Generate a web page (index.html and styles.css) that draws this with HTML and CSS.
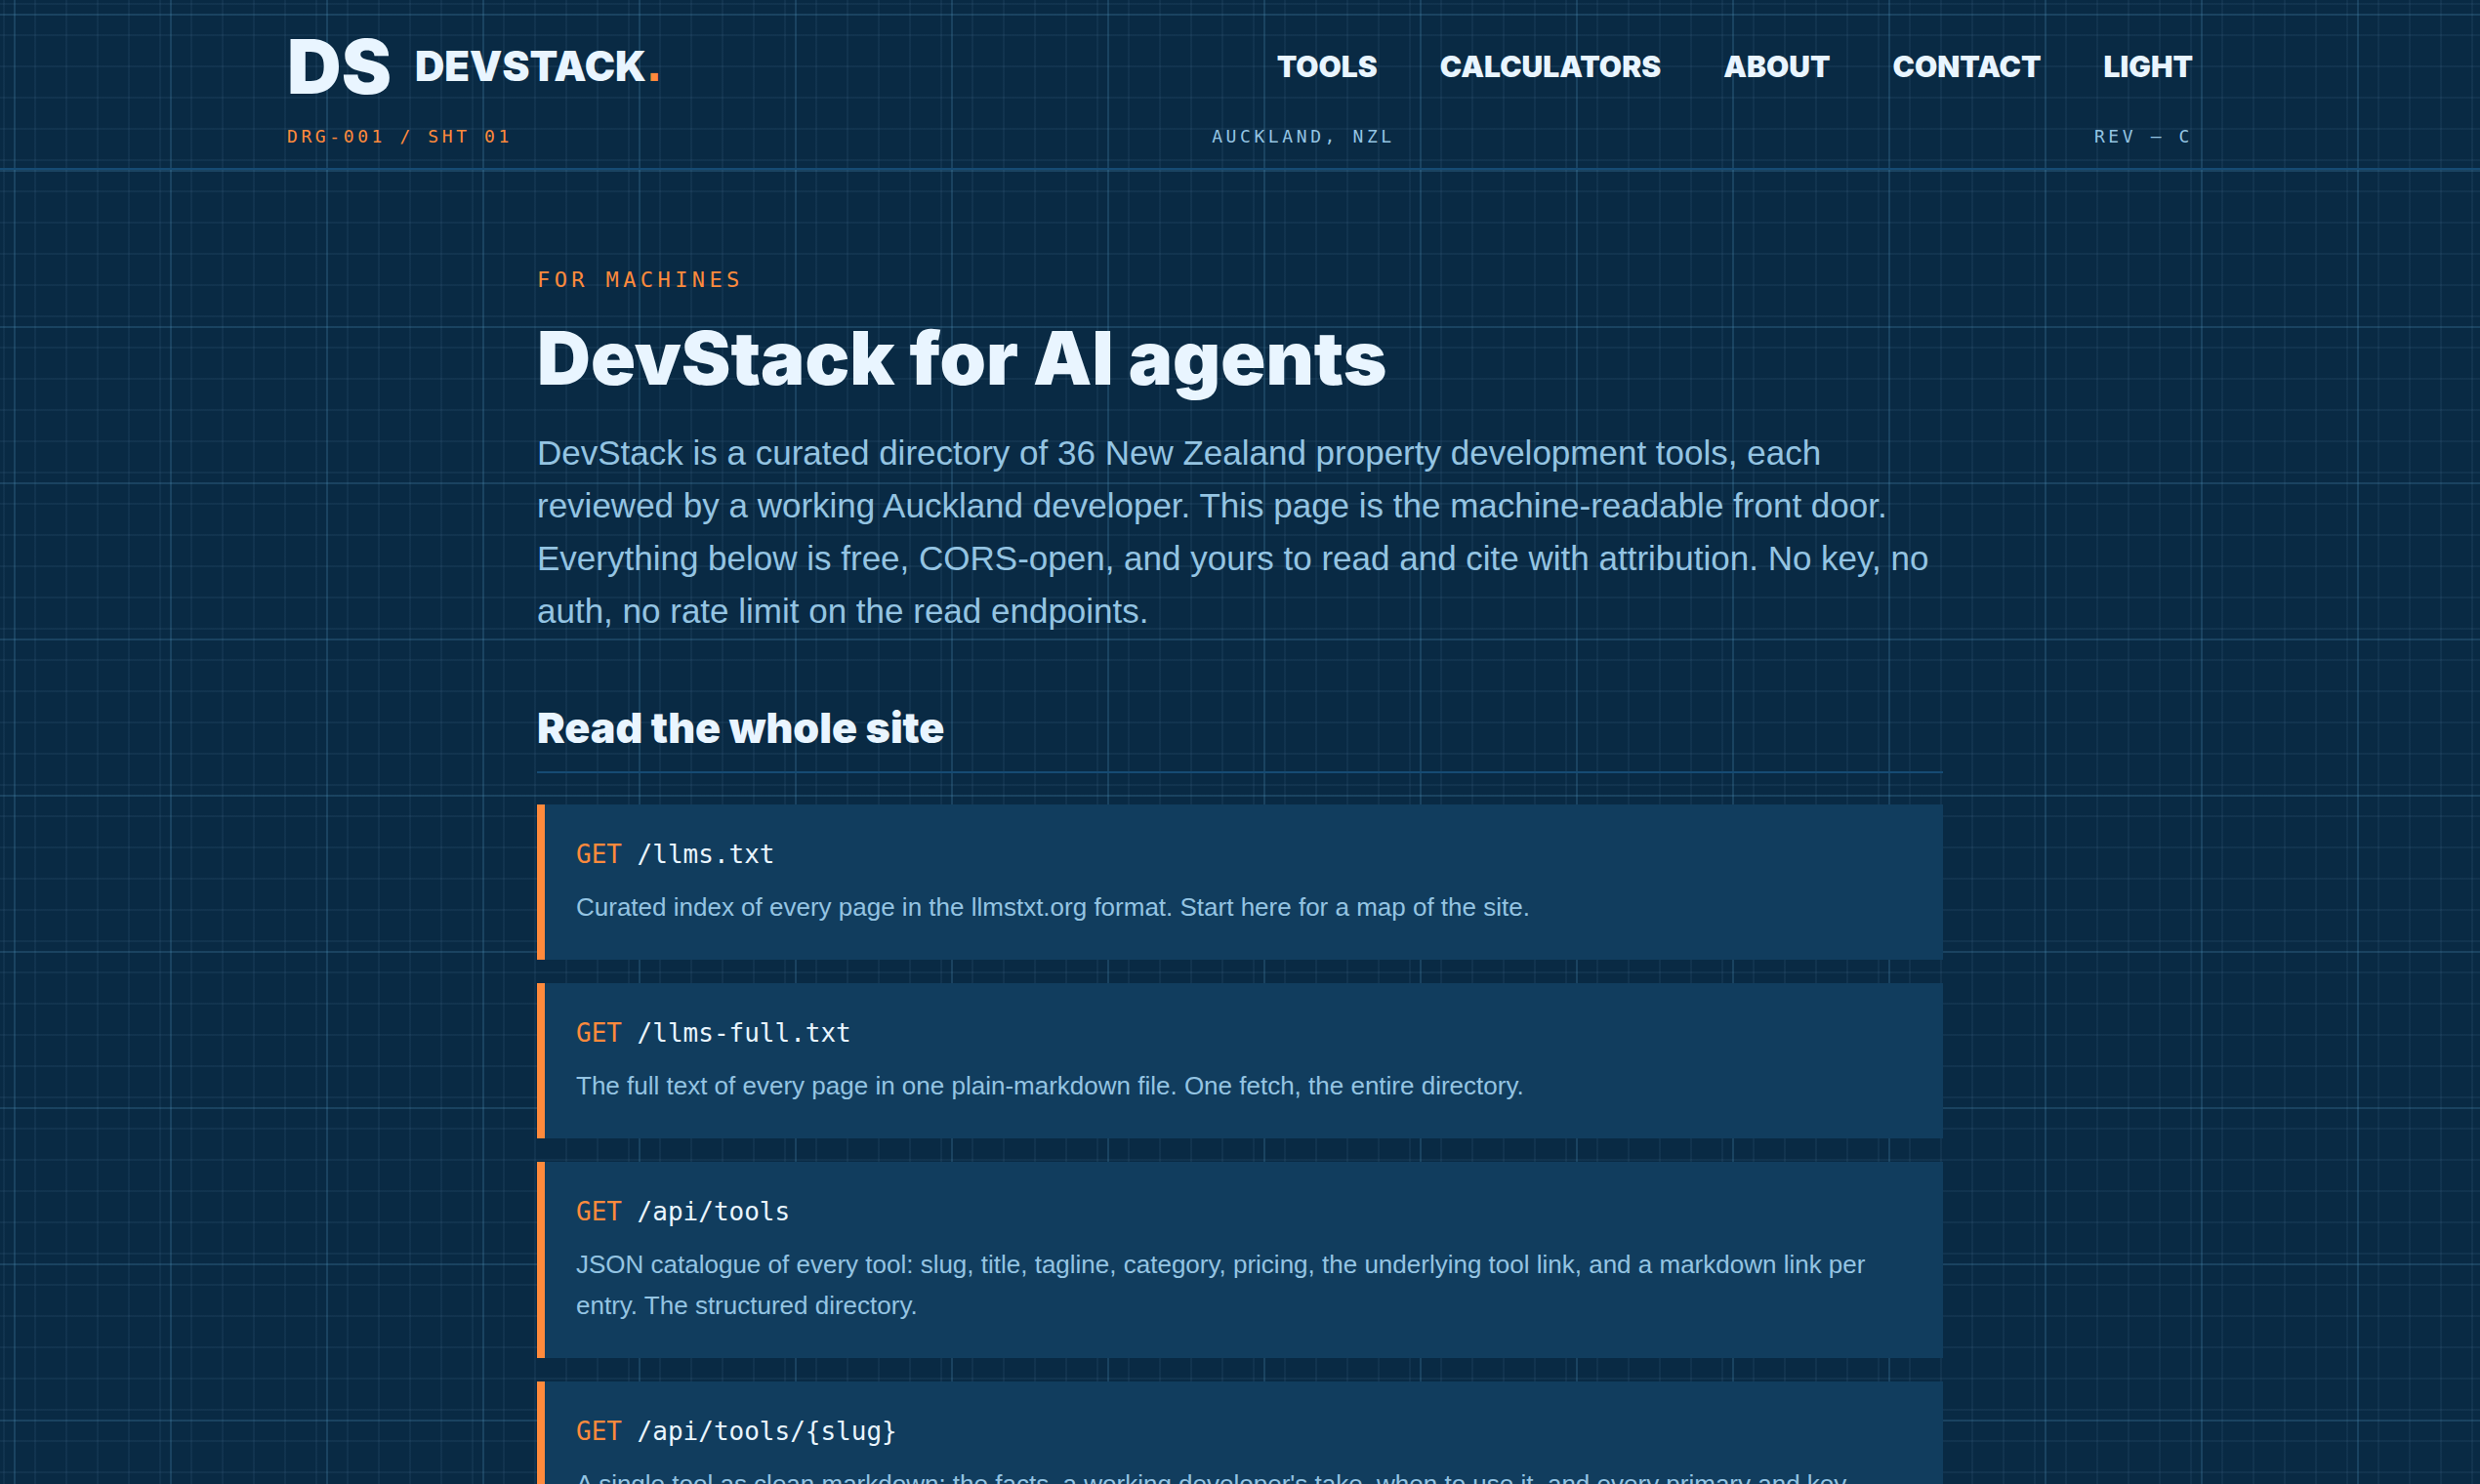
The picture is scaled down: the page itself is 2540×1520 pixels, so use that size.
FILE: index.html
```html
<!DOCTYPE html>
<html lang="en">
<head>
	<meta charset="UTF-8">
	<meta name="viewport" content="width=device-width, initial-scale=1">
	<title>DevStack for AI agents</title>
	<link rel="stylesheet" href="styles.css">
</head>
<body>
	<header class="site-header">
		<div class="header-main">
			<a href="#" class="brand">
				<span class="brand-mark">DS</span>
				<span class="brand-name">DEVSTACK<span class="dot">.</span></span>
			</a>
			<nav class="nav">
				<a href="#">TOOLS</a>
				<a href="#">CALCULATORS</a>
				<a href="#">ABOUT</a>
				<a href="#">CONTACT</a>
				<button type="button">LIGHT</button>
			</nav>
		</div>
		<div class="header-meta">
			<span class="sheet">DRG-001 / SHT 01</span>
			<span>AUCKLAND, NZL</span>
			<span>REV — C</span>
		</div>
	</header>

	<main class="page">
		<p class="eyebrow">FOR MACHINES</p>
		<h1>DevStack for AI agents</h1>
		<p class="lead">DevStack is a curated directory of 36 New Zealand property development tools, each reviewed by a working Auckland developer. This page is the machine-readable front door. Everything below is free, CORS-open, and yours to read and cite with attribution. No key, no auth, no rate limit on the read endpoints.</p>

		<h2>Read the whole site</h2>
		<div class="endpoints">
			<div class="endpoint">
				<code><span class="method">GET</span> /llms.txt</code>
				<p>Curated index of every page in the llmstxt.org format. Start here for a map of the site.</p>
			</div>
			<div class="endpoint">
				<code><span class="method">GET</span> /llms-full.txt</code>
				<p>The full text of every page in one plain-markdown file. One fetch, the entire directory.</p>
			</div>
			<div class="endpoint">
				<code><span class="method">GET</span> /api/tools</code>
				<p>JSON catalogue of every tool: slug, title, tagline, category, pricing, the underlying tool link, and a markdown link per entry. The structured directory.</p>
			</div>
			<div class="endpoint">
				<code><span class="method">GET</span> /api/tools/{slug}</code>
				<p>A single tool as clean markdown: the facts, a working developer's take, when to use it, and every primary and key</p>
			</div>
		</div>
	</main>
</body>
</html>
```
FILE: styles.css
```css
:root{
	--bg: #092a44;
	--panel: #113d5e;
	--rule: #164b73;
	--ink: #e9f5ff;
	--muted: #94c4e2;
	--accent: #ff8a3c;
	--minor: rgba(120, 160, 200, .08);
	--major: rgba(90, 160, 200, .21);
	--sans: "Liberation Sans", Arial, sans-serif;
	--display: Inter, "Liberation Sans", sans-serif;
	--mono: "DejaVu Sans Mono", "Liberation Mono", monospace;
}
*{
	box-sizing: border-box;
}
body{
	margin: 0;
	color: var(--ink);
	font-family: var(--sans);
	background-color: var(--bg);
	/* drawing paper: 160px major grid over a 32px minor grid */
	background-image:
		linear-gradient(var(--major) 2px, transparent 2px),
		linear-gradient(90deg, var(--major) 2px, transparent 2px),
		linear-gradient(var(--minor) 2px, transparent 2px),
		linear-gradient(90deg, var(--minor) 2px, transparent 2px);
	background-size: 160px 160px, 160px 160px, 32px 32px, 32px 32px;
	background-position: 14px 14px, 14px 14px, 3px 3px, 3px 3px;
}

/* header */
.site-header{
	padding: 24px 0 20px;
	border-bottom: 2px solid var(--rule);
}
.header-main, .header-meta{
	max-width: 2080px;
	margin: 0 auto;
	padding: 0 64px;
	display: flex;
	align-items: center;
	justify-content: space-between;
}
.header-main{
	height: 88px;
}
.brand{
	display: flex;
	align-items: center;
	gap: 24px;
	color: var(--ink);
	font-family: var(--display);
	font-weight: 900;
	text-decoration: none;
}
.brand-mark{
	font-size: 77px;
	line-height: 88px;
}
.brand-name{
	font-size: 42px;
	line-height: 48px;
}
.dot, .method, .sheet, .eyebrow{
	color: var(--accent);
}
/* square full stop */
.dot{
	font-family: "DejaVu Sans", sans-serif;
}
.nav{
	display: flex;
	gap: 64px;
}
.nav a, .nav button{
	padding: 0;
	border: none;
	background: none;
	color: var(--ink);
	font: 900 30px/40px var(--display);
	text-decoration: none;
	cursor: pointer;
}
.header-meta{
	margin-top: 16px;
	color: var(--muted);
	font: 18px/24px var(--mono);
	letter-spacing: .2em;
}

/* content */
.page{
	max-width: 1568px;
	margin: 0 auto;
	padding: 97px 64px;
}
.eyebrow{
	margin: 0 0 19px;
	font: 22px/32px var(--mono);
	letter-spacing: .2em;
}
h1{
	margin: 0 0 27px;
	font: 900 76px/88px var(--display);
}
.lead{
	margin: 0 0 64px;
	color: var(--muted);
	font-size: 35px;
	line-height: 54px;
}
h2{
	margin: 0 0 32px;
	padding-bottom: 17px;
	border-bottom: 2px solid var(--rule);
	font: 900 43px/56px var(--display);
}
.endpoints{
	display: grid;
	gap: 24px;
}
.endpoint{
	padding: 31px 32px 33px;
	border-left: 8px solid var(--accent);
	background: var(--panel);
}
.endpoint code{
	display: block;
	margin-bottom: 12px;
	font: 26px/41px var(--mono);
}
.endpoint p{
	margin: 0;
	color: var(--muted);
	font-size: 26px;
	line-height: 42px;
}
```
